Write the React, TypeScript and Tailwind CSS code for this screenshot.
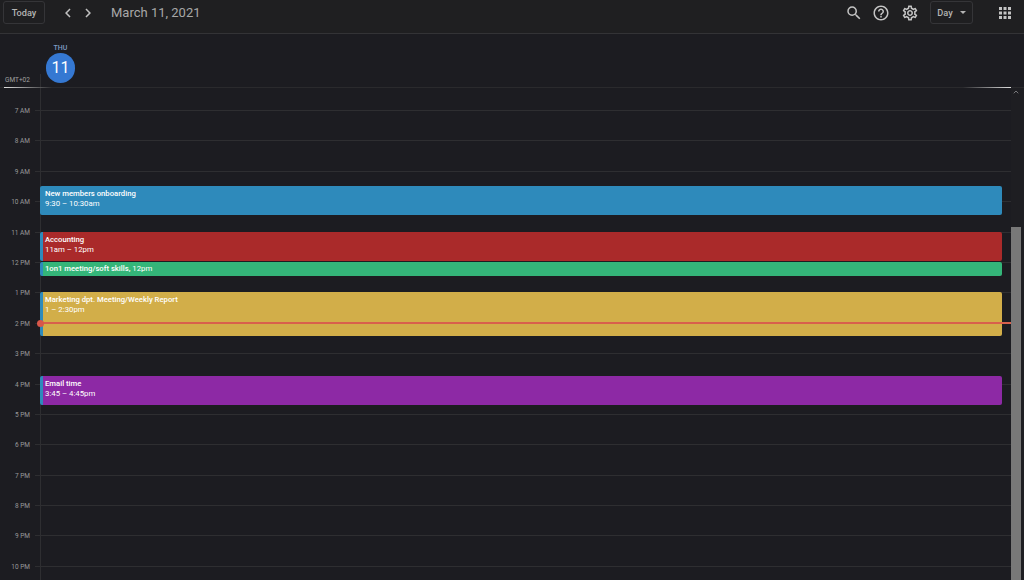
import { ChevronUp } from 'lucide-react';
import { MdApps, MdChevronLeft, MdChevronRight, MdHelpOutline, MdOutlineSettings, MdSearch } from 'react-icons/md';

const hours = ['7 AM', '8 AM', '9 AM', '10 AM', '11 AM', '12 PM', '1 PM', '2 PM', '3 PM', '4 PM', '5 PM', '6 PM', '7 PM', '8 PM', '9 PM', '10 PM'];

export default function App() {
  return (
    <div className="h-[580px] w-[1024px] overflow-hidden bg-[#1c1c21] font-['Roboto',sans-serif] flex flex-col">
      {/* Barre du haut */}
      <header className="h-[34px] shrink-0 flex items-start pt-px bg-[#1f1f21] border-b border-[#333336]">
        <button className="ml-[3px] h-[23px] w-[42px] rounded-[3px] border border-[#353538] text-[9.2px] font-medium text-[#b4b4b4]">
          Today
        </button>
        <MdChevronLeft className="ml-[14px] mt-[3px] h-[18px] w-[18px] text-[#c0c0c0]" />
        <MdChevronRight className="ml-[2px] mt-[3px] h-[18px] w-[18px] text-[#c0c0c0]" />
        <span className="ml-[14px] mt-[3px] text-[13px] leading-[18px] text-[#a8a8a8]">March 11, 2021</span>
        <div className="ml-auto flex items-start">
          <MdSearch className="mt-[3px] h-[18px] w-[18px] text-[#c4c4c4]" />
          <MdHelpOutline className="ml-[9px] mt-[3px] h-[18px] w-[18px] text-[#c4c4c4]" />
          <MdOutlineSettings className="ml-[11px] mt-[3px] h-[18px] w-[18px] text-[#c4c4c4]" />
          <button className="ml-[11px] h-[23px] w-[43px] rounded-[3px] border border-[#353538] flex items-center justify-center gap-[7px] text-[9.2px] font-medium text-[#b4b4b4]">
            Day
            <span className="border-x-[3px] border-t-[3px] border-x-transparent border-t-[#b4b4b4]" />
          </button>
          <MdApps className="ml-[23px] mr-[10px] mt-[3px] h-[18px] w-[18px] text-[#c4c4c4]" />
        </div>
      </header>

      {/* Jour */}
      <div className="relative h-[54px] shrink-0 border-b border-[#2a2a2d] pl-[46px]">
        <div className="w-[29px] pt-[10px] flex flex-col items-center">
          <span className="text-[7px] leading-[9px] font-medium text-[#7f9cc6]">THU</span>
          <span className="h-[29.5px] w-[29.5px] shrink-0 rounded-full bg-[#3578d2] flex items-center justify-center text-[16px] text-white">11</span>
        </div>
        <span className="absolute left-[5px] top-[42px] text-[6.5px] leading-[9px] text-[#a0a0a0]">GMT+02</span>
        <div className="absolute left-[40px] top-[40px] bottom-0 border-l border-[#2e2e31]" />
        <div className="absolute left-[4px] bottom-[-1px] h-px w-[48px] bg-gradient-to-r from-[#e0e0e0] to-transparent" />
        <div className="absolute right-[13px] bottom-[-1px] h-px w-[48px] bg-gradient-to-l from-[#e0e0e0] to-transparent" />
      </div>

      {/* Grille des heures */}
      <div className="relative flex-1 flex min-h-0">
        <div className="relative w-[1011px] shrink-0 overflow-hidden">
          <div className="h-[22px] ml-[40px] border-l border-[#2e2e31]" />
          {hours.map((h) => (
            <div key={h} className="relative h-[30.4px] border-t border-[#2e2e31] ml-[35px]">
              <span className="absolute right-[100%] top-[-4px] mr-[5px] whitespace-nowrap text-[6.5px] leading-[9px] text-[#9a9a9a]">{h}</span>
              <div className="absolute left-[5px] top-0 h-full border-l border-[#2e2e31]" />
            </div>
          ))}

          <div className="absolute left-[40px] top-[98px] h-[29px] w-[962px] rounded-[2px] bg-[#2e8abb] px-[5px] pt-[3px] text-[7.8px] leading-[9.5px] text-white">
            <div className="font-medium text-[7.7px]">New members onboarding</div>
            <div>9:30 – 10:30am</div>
          </div>
          <div className="absolute left-[40px] top-[144px] h-[29px] w-[962px] rounded-[2px] border-l-[3px] border-[#2e8abb] bg-[#aa2a2a] pl-[2px] pt-[3px] text-[7.8px] leading-[9.5px] text-white">
            <div className="font-medium text-[7.7px]">Accounting</div>
            <div>11am – 12pm</div>
          </div>
          <div className="absolute left-[40px] top-[174px] h-[14px] w-[962px] rounded-[2px] border-l-[3px] border-[#2e8abb] bg-[#34b579] pl-[2px] pt-[2px] text-[7.8px] leading-[10px] text-white">
            <span className="font-medium text-[7.7px]">1on1 meeting/soft skills,</span> 12pm
          </div>
          <div className="absolute left-[40px] top-[204px] h-[44px] w-[962px] rounded-[2px] border-l-[3px] border-[#2e8abb] bg-[#d2ae49] pl-[2px] pt-[3px] text-[7.8px] leading-[9.5px] text-white">
            <div className="font-medium text-[7.7px]">Marketing dpt. Meeting/Weekly Report</div>
            <div>1 – 2:30pm</div>
          </div>
          <div className="absolute left-[40px] top-[288px] h-[29px] w-[962px] rounded-[2px] border-l-[3px] border-[#2e8abb] bg-[#8d29a5] pl-[2px] pt-[3px] text-[7.8px] leading-[9.5px] text-white">
            <div className="font-medium text-[7.7px]">Email time</div>
            <div>3:45 – 4:45pm</div>
          </div>

          {/* Heure courante */}
          <div className="absolute left-[40px] right-0 top-[234px] h-[2px] bg-[#d8604c]" />
          <div className="absolute left-[36.5px] top-[231.5px] h-[7px] w-[7px] rounded-full bg-[#d8574a]" />
        </div>

        {/* Barre de défilement */}
        <div className="relative flex-1 bg-[#1e1e22]">
          <ChevronUp className="absolute left-[1px] top-0 h-[8px] w-[8px] text-[#77777a]" strokeWidth={3} />
          <div className="absolute left-0 top-[139px] bottom-0 w-[10px] bg-[#787878]" />
        </div>
      </div>
    </div>
  );
}
